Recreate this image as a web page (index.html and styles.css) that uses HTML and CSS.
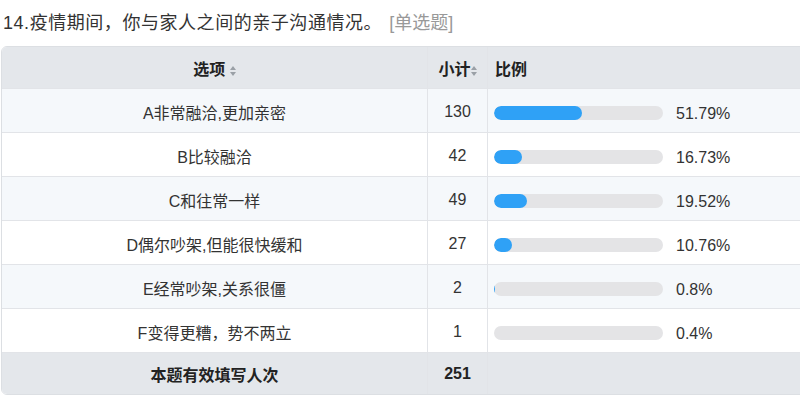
FILE: index.html
```html
<!DOCTYPE html>
<html>
<head>
<meta charset="utf-8">
<link rel="stylesheet" href="styles.css">
</head>
<body>
<div class="q-title"><span class="q-text">14.疫情期间，你与家人之间的亲子沟通情况。</span><span class="q-type">[单选题]</span></div>
<table class="stat">
  <thead>
    <tr>
      <th class="c-opt">选项 <svg class="sort" viewBox="0 0 6 10" width="6" height="10"><path d="M0 4 L3 0 L6 4 Z M0 6 L3 10 L6 6 Z" fill="#9aa0a6"/></svg></th>
      <th class="c-num">小计<svg class="sort" viewBox="0 0 6 10" width="6" height="10"><path d="M0 4 L3 0 L6 4 Z M0 6 L3 10 L6 6 Z" fill="#9aa0a6"/></svg></th>
      <th class="c-pct">比例</th>
    </tr>
  </thead>
  <tbody>
    <tr class="odd"><td class="c-opt">A非常融洽,更加亲密</td><td class="c-num">130</td><td class="c-pct"><div class="pc"><div class="bar"><div class="fill" style="width:51.79%"></div></div><span>51.79%</span></div></td></tr>
    <tr><td class="c-opt">B比较融洽</td><td class="c-num">42</td><td class="c-pct"><div class="pc"><div class="bar"><div class="fill" style="width:16.73%"></div></div><span>16.73%</span></div></td></tr>
    <tr class="odd"><td class="c-opt">C和往常一样</td><td class="c-num">49</td><td class="c-pct"><div class="pc"><div class="bar"><div class="fill" style="width:19.52%"></div></div><span>19.52%</span></div></td></tr>
    <tr><td class="c-opt">D偶尔吵架,但能很快缓和</td><td class="c-num">27</td><td class="c-pct"><div class="pc"><div class="bar"><div class="fill" style="width:10.76%"></div></div><span>10.76%</span></div></td></tr>
    <tr class="odd"><td class="c-opt">E经常吵架,关系很僵</td><td class="c-num">2</td><td class="c-pct"><div class="pc"><div class="bar"><div class="fill thin" style="width:0.8%"></div></div><span>0.8%</span></div></td></tr>
    <tr><td class="c-opt">F变得更糟，势不两立</td><td class="c-num">1</td><td class="c-pct"><div class="pc"><div class="bar"><div class="fill" style="width:0%"></div></div><span>0.4%</span></div></td></tr>
  </tbody>
  <tfoot>
    <tr><td class="c-opt">本题有效填写人次</td><td class="c-num">251</td><td class="c-pct"></td></tr>
  </tfoot>
</table>
</body>
</html>
```
FILE: styles.css
```css
html, body {
  margin: 0;
  padding: 0;
  background: #fff;
  overflow: hidden;
}
body {
  font-family: "Liberation Sans", Arial, "Noto Sans CJK SC", sans-serif;
  color: #333;
  padding-left: 1px;
}
.q-title {
  font-size: 18px;
  line-height: 22px;
  padding: 12px 0 12px 2px;
  color: #333;
}
.q-text { letter-spacing: 0.55px; }
.q-type {
  color: #999;
  margin-left: 7px;
}
.stat {
  border-collapse: separate;
  border-spacing: 0;
  width: 1000px;
  font-size: 16px;
  border: 1px solid #dcdfe3;
  border-radius: 6px;
  overflow: hidden;
}
.stat th, .stat td {
  border-right: 1px solid #e2e4e8;
  border-bottom: 1px solid #e2e4e8;
  padding: 0;
}
.stat th:last-child, .stat td:last-child { border-right: none; }
.stat tfoot td { border-bottom: none; }
.stat thead th {
  background: #e4e7eb;
  height: 41px;
  font-weight: bold;
  color: #222;
}
.stat tbody td {
  height: 40px;
  padding-top: 3px;
}
.stat tbody tr.odd td { background: #f5f8fb; }
.stat tfoot td {
  background: #e4e7eb;
  height: 41px;
  font-weight: bold;
  color: #222;
}
.c-opt { width: 425px; text-align: center; }
.c-num { width: 59px; text-align: center; }
.c-pct { text-align: left; }
.stat thead th.c-pct { padding-left: 7px; }
.pc {
  display: flex;
  align-items: center;
  padding-left: 6px;
  padding-top: 1px;
}
.bar {
  width: 169px;
  height: 14px;
  background: #e4e4e6;
  border-radius: 7px;
  overflow: hidden;
  margin-right: 13px;
}
.fill {
  height: 100%;
  background: #2fa1f6;
  border-radius: 7px;
}
.fill.thin { border-radius: 0; }
.pc span { font-size: 16px; color: #333; padding-top: 3px; }
.sort {
  display: inline-block;
  vertical-align: -1px;
}
```
